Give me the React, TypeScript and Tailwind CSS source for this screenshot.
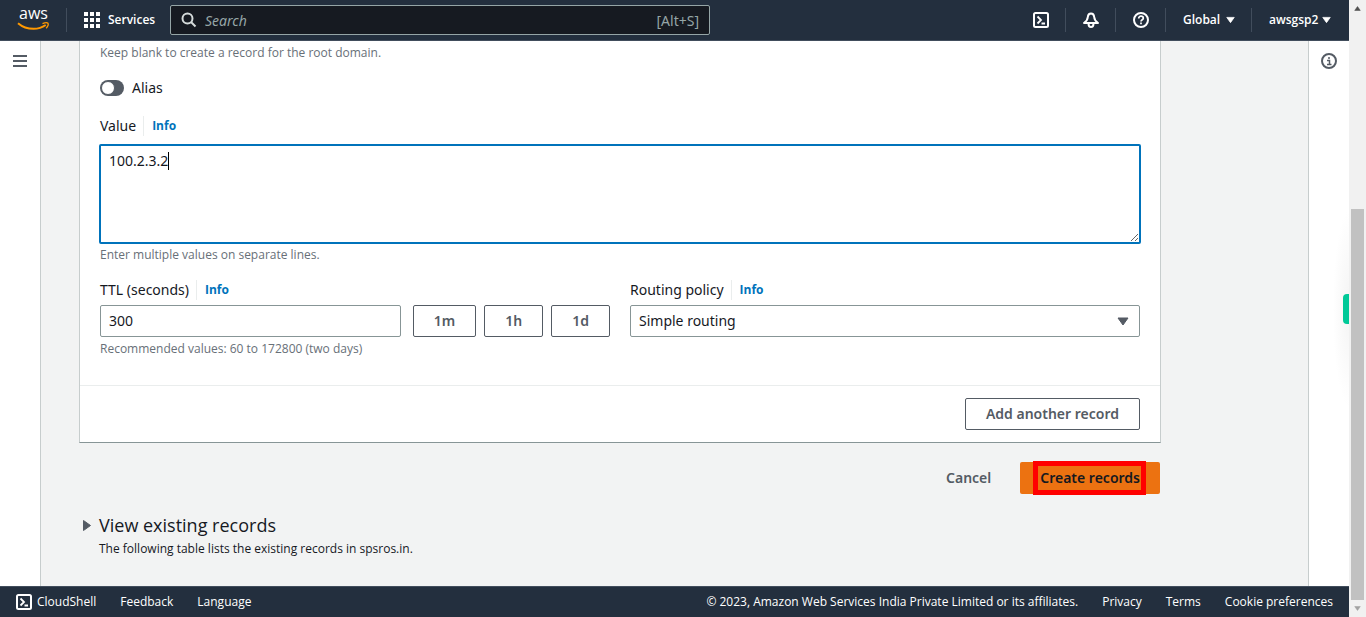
import type { ReactNode } from 'react'

const TTL_PRESETS = ['1m', '1h', '1d']
const LEGAL_LINKS = ['Privacy', 'Terms', 'Cookie preferences']

function AwsLogo() {
  return (
    <svg width="38" height="40" viewBox="0 -6 38 40" className="flex-none" aria-hidden="true">
      <text x="2" y="13" fontSize="16" fontWeight="500" fill="#fff" fontFamily="Open Sans, sans-serif">
        aws
      </text>
      <path d="M1 17.2C5.500 21 11 22.800 16.500 22.800c4.300 0 8.700-1.300 12.200-3.800" fill="none" stroke="#f90" strokeWidth="2" />
      <path d="M25.500 17.700c2-.9 4.800-1.200 5.500-.4.500.9-.3 3.300-1.800 5" fill="none" stroke="#f90" strokeWidth="1.300" />
    </svg>
  )
}

function TerminalIcon() {
  return (
    <svg width="16" height="16" viewBox="0 0 16 16" fill="none" stroke="currentColor" strokeWidth="2" aria-hidden="true">
      <rect x="1" y="1" width="14" height="14" rx="1.5" />
      <path d="M4.500 4.500 8 8l-3.500 3.500M8.500 11.500H12" strokeWidth="1.800" />
    </svg>
  )
}

function BellIcon() {
  return (
    <svg width="16" height="16" viewBox="0 0 16 16" fill="none" stroke="currentColor" strokeWidth="2" aria-hidden="true">
      <path d="M8 1.500C6 1.500 5 3 4.800 5 4.600 7.800 3.500 9.300 1 11h14c-2.500-1.700-3.600-3.200-3.800-6C11 3 10 1.500 8 1.500Z" strokeLinejoin="round" />
      <path d="M5.500 11.500c0 2 1 3.500 2.500 3.500s2.500-1.500 2.500-3.500" />
    </svg>
  )
}

function HelpIcon() {
  return (
    <svg width="16" height="16" viewBox="0 0 16 16" fill="none" stroke="currentColor" strokeWidth="2" aria-hidden="true">
      <circle cx="8" cy="8" r="7" />
      <path d="M5.700 6.500c0-1.400 1-2.300 2.300-2.300s2.300.8 2.300 2c0 1.500-2.300 1.600-2.300 3.300M8 10.500v1.800" strokeWidth="1.700" />
    </svg>
  )
}

function InfoIcon() {
  return (
    <svg width="16" height="16" viewBox="0 0 16 16" fill="none" stroke="currentColor" strokeWidth="2" aria-hidden="true">
      <circle cx="8" cy="8" r="7" />
      <path d="M7 5h2M6 7.500h2.500V11M6 11.500h4.500" strokeWidth="1.500" />
    </svg>
  )
}

function CaretDown({ className }: { className?: string }) {
  return (
    <svg viewBox="0 0 12 9" className={className} fill="currentColor" stroke="currentColor" strokeLinejoin="round" aria-hidden="true">
      <path d="M1 1h10L6 8Z" />
    </svg>
  )
}

function FieldLabel({ htmlFor, children }: { htmlFor: string; children: ReactNode }) {
  return (
    <div className="flex h-5 items-center">
      <label htmlFor={htmlFor} className="text-[14px] leading-5">
        {children}
      </label>
      <a
        href="#info"
        className="ml-[7px] border-l border-[#eaeded] pl-2 font-['Open_Sans',sans-serif] text-[12px] leading-5 font-bold text-[#0073bb]"
      >
        Info
      </a>
    </div>
  )
}

function Hint({ children }: { children: ReactNode }) {
  return <p className="font-['Open_Sans',sans-serif] text-[12px] leading-4 text-[#687078]">{children}</p>
}

function TopBar() {
  return (
    <header className="flex h-[41px] flex-none items-center border-b border-[#414d5c] bg-[#232f3e] font-['Open_Sans',sans-serif] text-[12px] font-semibold text-white">
      <a href="#home" aria-label="AWS home" className="flex h-6 w-[67px] items-center border-r border-[#414d5c] pl-[17px]">
        <AwsLogo />
      </a>
      <button type="button" className="flex w-[103px] items-center gap-2 pl-[17px]">
        <svg width="16" height="16" viewBox="0 0 16 16" fill="currentColor" aria-hidden="true">
          <path d="M0 0h4v4H0zM6 0h4v4H6zM12 0h4v4h-4zM0 6h4v4H0zM6 6h4v4H6zM12 6h4v4h-4zM0 12h4v4H0zM6 12h4v4H6zM12 12h4v4h-4z" />
        </svg>
        Services
      </button>
      <label className="flex h-[30px] w-[540px] items-center gap-2 rounded-xs border border-[#95a5a6] bg-[#161a21] px-2.5 font-['Noto_Sans',sans-serif] text-[14px] font-normal text-[#95a5a6]">
        <svg width="16" height="16" viewBox="0 0 16 16" fill="none" stroke="#d5dbdb" strokeWidth="2" aria-hidden="true">
          <circle cx="6.500" cy="6.500" r="5" />
          <path d="m10 10 4.500 4.500" />
        </svg>
        <input
          type="search"
          aria-label="Search"
          placeholder="Search"
          className="min-w-0 flex-1 bg-transparent outline-none placeholder:text-[#95a5a6] placeholder:italic"
        />
        <span>[Alt+S]</span>
      </label>
      <nav aria-label="Account" className="ml-auto flex h-6 items-stretch divide-x divide-[#414d5c]">
        <button type="button" aria-label="CloudShell" className="flex w-[50px] items-center justify-center">
          <TerminalIcon />
        </button>
        <button type="button" aria-label="Notifications" className="flex w-[50px] items-center justify-center">
          <BellIcon />
        </button>
        <button type="button" aria-label="Help" className="flex w-[50px] items-center justify-center">
          <HelpIcon />
        </button>
        <button type="button" className="flex w-[86px] items-center gap-1.5 pl-[17px]">
          Global
          <CaretDown className="h-2 w-[9px]" />
        </button>
        <button type="button" className="flex w-[97px] items-center gap-1 pl-[17px]">
          awsgsp2
          <CaretDown className="h-2 w-[9px]" />
        </button>
      </nav>
    </header>
  )
}

function RecordCard() {
  return (
    <section className="border border-t-0 border-[#c7cdcd] border-b-[#879596] bg-white">
      <div className="px-5 pt-1 pb-7">
        <Hint>Keep blank to create a record for the root domain.</Hint>
        <label className="mt-[17px] flex items-center gap-2 text-[14px] leading-5">
          <input
            type="checkbox"
            role="switch"
            className="flex h-4 w-6 appearance-none items-center rounded-full bg-[#545b64] px-px before:size-3.5 before:rounded-full before:border before:border-[#545b64] before:bg-white"
          />
          Alias
        </label>

        <div className="mt-[18px]">
          <FieldLabel htmlFor="value">Value</FieldLabel>
        </div>
        <div className="relative -mx-px mt-2 mb-[3px]">
          <textarea
            id="value"
            defaultValue="100.2.3.2"
            className="block h-[100px] w-full resize-y rounded-xs border-2 border-[#0073bb] px-2 py-[5px] text-[14px] leading-5 outline-none"
          />
          {/* text cursor */}
          <span className="absolute top-2 left-[69px] h-[18px] w-px bg-black" />
        </div>
        <Hint>Enter multiple values on separate lines.</Hint>

        <div className="mt-[17px] grid grid-cols-2 gap-5">
          <div className="space-y-[5px]">
            <FieldLabel htmlFor="ttl">TTL (seconds)</FieldLabel>
            <div className="mb-1 flex gap-2">
              <input
                id="ttl"
                defaultValue="300"
                className="mr-1 h-8 min-w-0 flex-1 rounded-xs border border-[#879596] px-2 pb-0.5 text-[14px] outline-none"
              />
              {TTL_PRESETS.map((preset) => (
                <button
                  key={preset}
                  type="button"
                  className="h-8 rounded-xs border border-[#545b64] px-5 pb-0.5 text-[14px] font-semibold text-[#545b64]"
                >
                  {preset}
                </button>
              ))}
            </div>
            <Hint>Recommended values: 60 to 172800 (two days)</Hint>
          </div>
          <div className="space-y-[5px]">
            <FieldLabel htmlFor="routing">Routing policy</FieldLabel>
            <div className="relative">
              <select
                id="routing"
                className="block h-8 w-full appearance-none rounded-xs border border-[#879596] bg-white px-2 pb-0.5 text-[14px] outline-none"
              >
                <option>Simple routing</option>
              </select>
              <CaretDown className="pointer-events-none absolute top-3 right-[11px] h-[9px] w-3 text-[#545b64]" />
            </div>
          </div>
        </div>
      </div>
      <div className="flex justify-end border-t border-[#eaeded] px-5 py-3">
        <button type="button" className="h-8 rounded-xs border border-[#545b64] px-5 pb-0.5 text-[14px] font-semibold text-[#545b64]">
          Add another record
        </button>
      </div>
    </section>
  )
}

function BottomBar() {
  return (
    <footer className="flex h-[31px] flex-none items-center border-t border-[#414d5c] bg-[#232f3e] px-4 font-['Open_Sans',sans-serif] text-[12px] font-medium text-white">
      <button type="button" className="flex items-center gap-[5px]">
        <TerminalIcon />
        CloudShell
      </button>
      <a href="#feedback" className="ml-6">
        Feedback
      </a>
      <a href="#language" className="ml-6">
        Language
      </a>
      <span className="ml-auto">© 2023, Amazon Web Services India Private Limited or its affiliates.</span>
      {LEGAL_LINKS.map((label) => (
        <a key={label} href="#legal" className="ml-6">
          {label}
        </a>
      ))}
    </footer>
  )
}

/** Page scrollbar, parked at the end of the form. */
function ScrollTrack() {
  return (
    <div aria-hidden="true" className="flex w-[17px] flex-none flex-col items-stretch bg-[#f1f1f1] px-0.5">
      <span className="flex h-[17px] flex-none items-center justify-center">
        <CaretDown className="h-[5px] w-[7px] rotate-180 text-[#505050]" />
      </span>
      <span className="grow-[192]" />
      <span className="grow-[391] bg-[#c1c1c1]" />
      <span className="flex h-[17px] flex-none items-center justify-center">
        <CaretDown className="h-[5px] w-[7px] text-[#a3a3a3]" />
      </span>
    </div>
  )
}

export default function App() {
  return (
    <div className="flex h-dvh bg-white font-['Noto_Sans',sans-serif] text-[#16191f]">
      <div className="flex min-w-0 flex-1 flex-col">
        <TopBar />
        <div className="flex min-h-0 flex-1">
          <aside className="flex w-[41px] flex-none justify-center border-r border-[#c7cdcd] pt-3.5">
            <button type="button" aria-label="Open navigation" className="h-3 w-3.5 text-[#545b64]">
              <svg width="14" height="12" viewBox="0 0 14 12" fill="currentColor" aria-hidden="true">
                <path d="M0 0h14v2H0zM0 5h14v2H0zM0 10h14v2H0z" />
              </svg>
            </button>
          </aside>

          <main className="min-w-0 flex-1 overflow-hidden bg-[#f2f3f3] px-[38px]">
            <div className="max-w-[1082px]">
              <RecordCard />
              <div className="mt-[19px] flex items-center justify-end gap-[9px] pr-px text-[14px] font-semibold">
                <button type="button" className="h-8 px-5 pb-0.5 text-[#545b64]">
                  Cancel
                </button>
                <button type="button" className="relative h-8 rounded-xs bg-[#ec7211] px-5 pb-0.5">
                  Create records
                  <span className="absolute -inset-y-px right-3.5 left-[13px] border-[5px] border-[#f00]" />
                </button>
              </div>

              <div className="mt-[19px] flex gap-1.5 pl-0.5 font-['Open_Sans',sans-serif]">
                <CaretDown className="mt-2 h-[9px] w-3 flex-none -rotate-90 text-[#545b64]" />
                <div>
                  <h2 className="text-[18px] leading-6">View existing records</h2>
                  <p className="mt-1 text-[12px] leading-4">The following table lists the existing records in spsros.in.</p>
                </div>
              </div>
            </div>
          </main>

          <aside className="relative flex w-[41px] flex-none justify-center border-l border-[#c7cdcd] pt-3">
            <button type="button" aria-label="Open help panel" className="size-4 text-[#545b64]">
              <InfoIcon />
            </button>
            {/* docked extension tab and the soft shade around it */}
            <span className="absolute top-[170px] right-0 h-[196px] w-4 bg-[radial-gradient(16px_98px_at_100%_50%,#f4f4f4,#fff)]" />
            <span className="absolute top-[253px] right-0 h-[30px] w-1.5 rounded-l-sm bg-[#00c998]" />
          </aside>
        </div>
        <BottomBar />
      </div>
      <ScrollTrack />
    </div>
  )
}
